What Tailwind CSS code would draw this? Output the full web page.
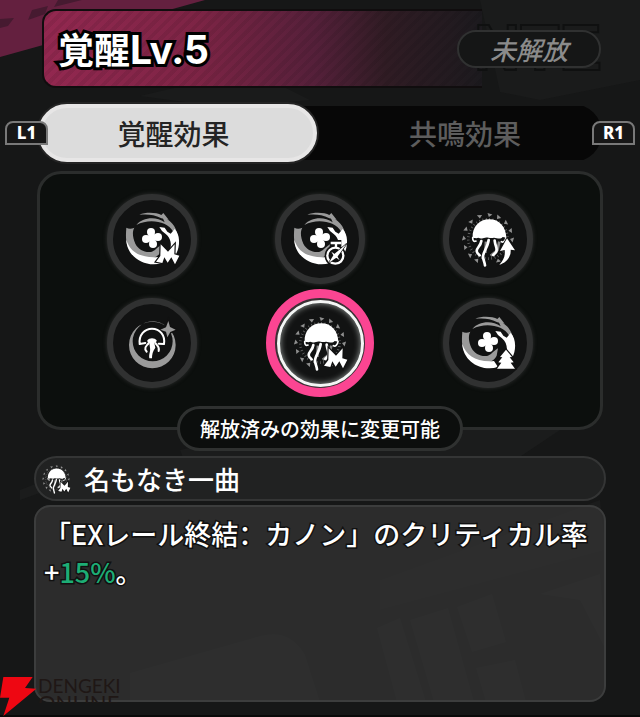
<!DOCTYPE html>
<html lang="ja">
<head>
<meta charset="utf-8">
<meta name="viewport" content="width=device-width, initial-scale=1">
<title>覚醒Lv.5</title>
<script src="https://cdn.jsdelivr.net/npm/@tailwindcss/browser@4"></script>
</head>
<body class="relative min-h-screen overflow-x-hidden bg-[#161717] text-white font-['Noto_Sans_CJK_JP','Noto_Sans',sans-serif]">

<!-- Shared icon parts, drawn around a 0,0 centre -->
<svg class="absolute size-0" aria-hidden="true">
  <defs>
    <g id="swirl">
      <path fill="#9a9a9a" d="M-77-34C-70-30-62-30-53-34-60-22-58-4-50 14-40 33-20 42 0 38 10 35 14 26 30 16L26 38C18 54 0 62-20 60-50 56-74 32-77 8-79-8-78-22-77-34Z"/>
      <path fill="#9a9a9a" d="M-47-42C-30-63 10-70 38-50L30-68C52-58 74-40 76-8L64-22C44-54-8-62-47-42Z"/>
      <path fill="#9a9a9a" d="M-38-73C-18-82 14-80 28-72L34-78 50-58 28-62C6-74-14-75-38-73Z"/>
      <path fill="#fff" d="M-77 2C-66 38-36 58 18 54L30 72C-20 88-76 54-77 2Z"/>
      <path fill="#fff" d="M22-36 38-34 46-22 56-16 68-30C84-14 86 20 72 46L54 34C60 16 56-2 42-14L30-24Z"/>
      <path stroke="#fff" stroke-width="18" stroke-linecap="round" d="M-18 0 18-6M-3-20 3 15"/>
      <g fill="#fff"><circle cx="-18" cy="0" r="12"/><circle cx="18" cy="-6" r="12"/><circle cx="-3" cy="-21" r="12"/><circle cx="3" cy="15" r="12"/></g>
    </g>
    <path id="shard" fill="#8f8f8f" d="M-7-78 8-74-2-66Z"/>
    <g id="jelly">
      <use href="#shard" transform="rotate(-20)"/><use href="#shard" transform="rotate(4)"/><use href="#shard" transform="rotate(26)"/><use href="#shard" transform="rotate(48)"/><use href="#shard" transform="rotate(70)"/><use href="#shard" transform="rotate(92)"/><use href="#shard" transform="rotate(-44)"/><use href="#shard" transform="rotate(-66)"/><use href="#shard" transform="rotate(-88)"/><use href="#shard" transform="rotate(-110)"/><use href="#shard" transform="rotate(-132)"/><use href="#shard" transform="rotate(-152)"/><use href="#shard" transform="rotate(155)"/>
      <circle r="59" fill="none" stroke="#777" stroke-width="8" stroke-dasharray="2 8"/>
      <path fill="#fff" d="M-46-4C-48-36-26-59 4-59 34-59 54-36 55-4L44-6C38 2 28-2 18-4 4 0-2-8-12-3-22 2-28-8-34-2Z"/>
      <path fill="none" stroke="#fff" stroke-width="5" stroke-linecap="round" d="M-46-4C-46 6-42 9-36 6M54-4C52 6 46 12 40 8"/>
      <path fill="none" stroke="#888" stroke-width="8" d="M-6 8-8 42M34 8 28 34 8 50"/>
      <path fill="none" stroke="#fff" stroke-width="8" stroke-linecap="round" d="M-20 6C-22 22-34 26-34 36-34 42-28 46-25 49M2 3C0 24-16 40-15 54-14 64-10 70-9 79M20 5C22 24 30 28 24 40L16 48"/>
    </g>
    <path id="badge-m" fill="#fff" stroke="#111" stroke-width="7" paint-order="stroke" stroke-linejoin="miter" d="M26 16 48 38 68 16 67 46 82 50 69 76 58 55 47 71 37 55 31 72 12 68 25 51Z"/>
    <symbol id="icon-swirl-m" viewBox="-135 -135 270 270"><use href="#swirl"/><use href="#badge-m"/></symbol>
    <symbol id="icon-swirl-watch" viewBox="-135 -135 270 270"><use href="#swirl"/>
      <g transform="translate(46 50)"><circle r="32" fill="#111"/><path fill="none" stroke="#111" stroke-width="20" d="M-14-37H18"/><circle r="24" fill="none" stroke="#fff" stroke-width="7"/><path fill="none" stroke="#fff" stroke-width="7" d="M-14-38H18M2-38V-24"/><path fill="#fff" stroke="#111" stroke-width="4" paint-order="stroke" d="M34-36 5 5-20 22-4-4Z"/><path fill="#fff" d="M-12-12-1-4-5 0ZM13 14 1 5 5 0Z"/></g></symbol>
    <symbol id="icon-jelly-up" viewBox="-135 -135 270 270"><use href="#jelly"/><path fill="#fff" stroke="#111" stroke-width="6" paint-order="stroke" d="M57-2 81 34 68 32C70 54 54 72 34 77 48 62 52 50 50 33L36 36Z"/></symbol>
    <symbol id="icon-jelly-m" viewBox="-135 -135 270 270"><use href="#jelly"/><use href="#badge-m"/></symbol>
    <symbol id="icon-jelly-small" viewBox="-85 -85 170 170"><use href="#jelly"/><use href="#badge-m"/></symbol>
    <symbol id="icon-swirl-tree" viewBox="-135 -135 270 270"><use href="#swirl"/><path fill="#fff" stroke="#111" stroke-width="7" paint-order="stroke" d="M54 20 72 42 65 43 77 58 68 59 81 77H27L40 59 31 58 43 43 36 42Z"/></symbol>
    <symbol id="icon-moon" viewBox="-135 -135 270 270">
      <path fill="#9a9a9a" fill-rule="evenodd" d="M-69 6A70 70 0 1 0 71 6A70 70 0 1 0-69 6ZM-58-5A60 60 0 1 1 62-5A60 60 0 1 1-58-5Z"/>
      <path fill="#9a9a9a" stroke="#111" stroke-width="9" paint-order="stroke" d="M49-66 54-48 71-40 55-33 46-17 42-34 25-40 42-47Z"/>
      <path fill="none" stroke="#fff" stroke-width="6" stroke-linejoin="round" stroke-linecap="round" d="M-37 3C-40-24-22-43 0-43 24-43 40-22 36 3L20 2M-37 3-20 0"/>
      <path fill="#fff" d="M-14-8C-8-16 8-16 14-8 15-3 10-1 7 0L10 14C2 26 0 34 0 46L-8 46C-10 32-4 26-6 14L-8 0C-12-1-15-4-14-8Z"/>
      <path fill="none" stroke="#fff" stroke-width="6" stroke-linecap="round" d="M-10 0C-14 8-22 8-20 20L-16 26M10 0C14 8 24 10 20 24"/>
    </symbol>
  </defs>
</svg>

<!-- Backdrop -->
<svg class="absolute inset-0 size-full" viewBox="0 0 640 717" preserveAspectRatio="none" aria-hidden="true">
  <path fill="#64203f" d="M0 0H205L0 57Z"/>
  <path fill="#461a30" d="M32 10 48 6 45 14 28 20ZM0 19 14 18 8 26 0 28ZM58 0H82L54 7Z"/>
  <path fill="#1a1b1b" d="M480 0H640V80L540 100 500 92ZM140 96 250 70 310 100 230 108Z"/>
  <path fill="#1b1c1c" d="M180 450 440 395 560 430 500 470 200 500ZM20 490 110 455 90 475 20 500ZM380 580 600 500 606 550 380 610Z"/>
  <path fill="#232727" d="M130 673 260 636Q290 628 305 655L320 702H130ZM377 628 400 618 426 702H397ZM410 620 448 608 474 702H434ZM457 607 492 594 506 642 472 652ZM476 668 515 660 526 702H486ZM540 594 600 574 606 650 580 600Z"/>
  <path fill="#090909" d="M0 715H640V717H0Z"/>
</svg>

<main class="relative flex min-h-screen flex-col px-[34px] pt-[9px] pb-[15px]">
  <header class="relative ml-2 flex h-[79px] items-center justify-between pr-[5px] pl-4">
    <div class="absolute inset-y-0 left-0 w-[78%] rounded-l-[14px] border-2 border-r-0 border-[#100d0e] bg-[repeating-linear-gradient(135deg,transparent_0_4px,#00000012_4px_8px),linear-gradient(90deg,#932850_0%,#7d2445_35%,#55203a_62%,#301c24_78%,#1c1a1e_100%)]"></div>
    <div class="absolute right-1 top-0 font-['Liberation_Sans',sans-serif] text-[64px] leading-[79px] font-bold text-transparent [-webkit-text-stroke:2px_#0f1010]" aria-hidden="true">NTE</div>
    <h1 class="relative text-[36px] leading-[40px] font-bold [paint-order:stroke_fill] [-webkit-text-stroke:6px_#000]">覚醒<span class="font-['Inter','Noto_Sans_CJK_JP',sans-serif] text-[39px]">Lv.5</span></h1>
    <span class="relative flex h-[38px] w-[144px] items-center justify-center rounded-full border-2 border-[#303131] bg-[#151616] text-[26px] leading-8 font-medium text-[#8b8b8b] italic">未解放</span>
  </header>

  <nav class="-mx-[29px] mt-4 flex items-center" aria-label="効果">
    <button type="button" class="relative z-10 h-6 w-[43px] shrink-0 rounded-t-[8px] border-2 border-[#797979] bg-[#171717] font-['Noto_Sans',sans-serif] text-[17px] leading-5 font-extrabold">L1</button>
    <div role="tablist" class="-mx-[10px] grid flex-1 grid-cols-2 items-center rounded-full bg-[linear-gradient(#0000_2px,#070707_2px_56px,#0000_56px)]">
      <button type="button" role="tab" aria-selected="true" class="mr-[3px] h-[58px] rounded-full border-4 border-[#e7e6e6] bg-[#dcdcdc] pr-2 text-[28px] leading-9 font-medium text-[#242424] shadow-[0_0_0_2px_#242424]">覚醒効果</button>
      <button type="button" role="tab" aria-selected="false" class="h-[58px] rounded-full pl-2 text-[28px] leading-9 font-medium text-[#5d5d5d]">共鳴効果</button>
    </div>
    <button type="button" class="relative z-10 h-6 w-[43px] shrink-0 rounded-t-[8px] border-2 border-[#797979] bg-[#171717] font-['Noto_Sans',sans-serif] text-[17px] leading-5 font-extrabold">R1</button>
  </nav>

  <section class="mx-[3px] mt-[9px] rounded-[24px] border-[3px] border-[#2b2d2c] bg-[#0c0f0d] px-7 pt-[13px] pb-8" aria-label="効果一覧">
    <div class="grid auto-rows-[104px] grid-cols-3 place-items-center">
      <button type="button" aria-label="効果1" class="size-[90px] rounded-full border-[6px] border-[#303131] bg-[#111212] shadow-[0_0_4px_#303131]"><svg class="-m-[6px] size-[90px]"><use href="#icon-swirl-m"/></svg></button>
      <button type="button" aria-label="効果2" class="size-[90px] rounded-full border-[6px] border-[#303131] bg-[#111212] shadow-[0_0_4px_#303131]"><svg class="-m-[6px] size-[90px]"><use href="#icon-swirl-watch"/></svg></button>
      <button type="button" aria-label="効果3" class="size-[90px] rounded-full border-[6px] border-[#303131] bg-[#111212] shadow-[0_0_4px_#303131]"><svg class="-m-[6px] size-[90px]"><use href="#icon-jelly-up"/></svg></button>
      <button type="button" aria-label="効果4" class="size-[90px] rounded-full border-[6px] border-[#303131] bg-[#111212] shadow-[0_0_4px_#303131]"><svg class="-m-[6px] size-[90px]"><use href="#icon-moon"/></svg></button>
      <button type="button" aria-label="名もなき一曲" aria-pressed="true" class="-m-1 flex size-[108px] items-center justify-center rounded-full border-[9px] border-[#fb4592] bg-[#3b3035]"><span class="flex size-[87px] items-center justify-center rounded-full border-[3px] border-[#f4f6f5] bg-[#121313] shadow-[inset_0_0_6px_#9a9f9d]"><svg class="size-[90px] shrink-0"><use href="#icon-jelly-m"/></svg></span></button>
      <button type="button" aria-label="効果6" class="size-[90px] rounded-full border-[6px] border-[#303131] bg-[#111212] shadow-[0_0_4px_#303131]"><svg class="-m-[6px] size-[90px]"><use href="#icon-swirl-tree"/></svg></button>
    </div>
  </section>

  <p class="relative -mt-6 flex h-[45px] items-center self-center rounded-full border-[3px] border-[#2f3130] bg-[#0c0e0d] px-5 text-[20px] leading-7 font-medium">解放済みの効果に変更可能</p>

  <h2 class="mt-[5px] flex h-[45px] items-center gap-[13px] rounded-full border-2 border-[#343535] bg-[#222323]/90 pl-[5px] text-[26px] leading-9 font-medium"><svg class="size-[30px]" aria-hidden="true"><use href="#icon-jelly-small"/></svg>名もなき一曲</h2>

  <section class="mt-[4px] flex-1 rounded-[16px] border-2 border-[#3c3d3d] bg-[#303030]/85 pt-[8px] pl-[8px]">
    <p class="text-[27px] leading-[38px] font-medium [paint-order:stroke_fill] [-webkit-text-stroke:3px_#111]">「EXレール終結<span class="font-['Noto_Sans_CJK_SC',sans-serif]" lang="zh-CN">：</span>カノン」のクリティカル率<br>+<span class="text-[#1dad75]">15%</span>。</p>
  </section>
</main>

<div class="absolute bottom-0 left-0 flex h-10 items-start" aria-label="DENGEKI ONLINE">
  <svg class="h-10 w-[37px]" viewBox="0 231 111 120" aria-hidden="true"><path fill="#ee0712" d="M10 231H98L75 264 109 266 10 348 28 293H0Z"/></svg>
  <div class="h-[26px] overflow-hidden pl-px font-['Lato',sans-serif] text-[#1f1715]">
    <div class="text-[19px] leading-[17px]">DENGEKI</div>
    <div class="text-[22px] leading-[18px]">ONLINE</div>
  </div>
</div>
</body>
</html>
